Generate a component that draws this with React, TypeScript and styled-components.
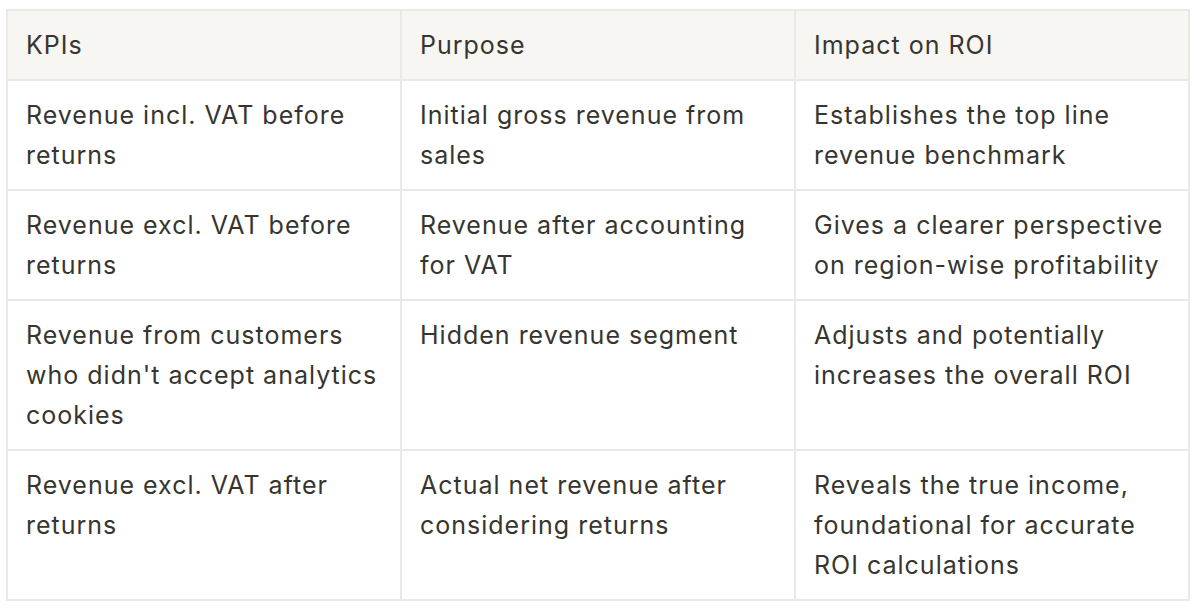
import React from "react";
import styled, { createGlobalStyle } from "styled-components";

const GlobalStyle = createGlobalStyle`
  html, body { margin: 0; padding: 0; background: #ffffff; }
  body { font-family: Inter, "Noto Sans", "Liberation Sans", sans-serif; }
`;

const Page = styled.div`
  padding: 9px 6px;
`;

const Table = styled.table`
  border-collapse: separate;
  border-spacing: 0;
  table-layout: fixed;
  width: 1184px;
  border-top: 2px solid #e9e9e7;
  border-left: 2px solid #e9e9e7;
`;

const Cell = styled.td<{ $head?: boolean }>`
  box-sizing: border-box;
  width: 394px;
  padding: 14px 18px;
  border-right: 2px solid #e9e9e7;
  border-bottom: 2px solid #e9e9e7;
  background: ${(p) => (p.$head ? "#f7f6f3" : "#ffffff")};
  color: #37352f;
  font-size: 25px;
  letter-spacing: 1px;
  line-height: 40px;
  font-weight: 400;
  text-align: left;
  vertical-align: top;
`;

const rows: [string, string, string][] = [
  ["Revenue incl. VAT before returns", "Initial gross revenue from sales", "Establishes the top line revenue benchmark"],
  ["Revenue excl. VAT before returns", "Revenue after accounting for VAT", "Gives a clearer perspective on region-wise profitability"],
  ["Revenue from customers who didn't accept analytics cookies", "Hidden revenue segment", "Adjusts and potentially increases the overall ROI"],
  ["Revenue excl. VAT after returns", "Actual net revenue after considering returns", "Reveals the true income, foundational for accurate ROI calculations"],
];

export default function App() {
  return (
    <>
      <GlobalStyle />
      <Page>
        <Table>
          <thead>
            <tr>
              <Cell as="th" $head>KPIs</Cell>
              <Cell as="th" $head>Purpose</Cell>
              <Cell as="th" $head>Impact on ROI</Cell>
            </tr>
          </thead>
          <tbody>
            {rows.map((r, i) => (
              <tr key={i}>
                {r.map((c, j) => (
                  <Cell key={j}>{c}</Cell>
                ))}
              </tr>
            ))}
          </tbody>
        </Table>
      </Page>
    </>
  );
}
